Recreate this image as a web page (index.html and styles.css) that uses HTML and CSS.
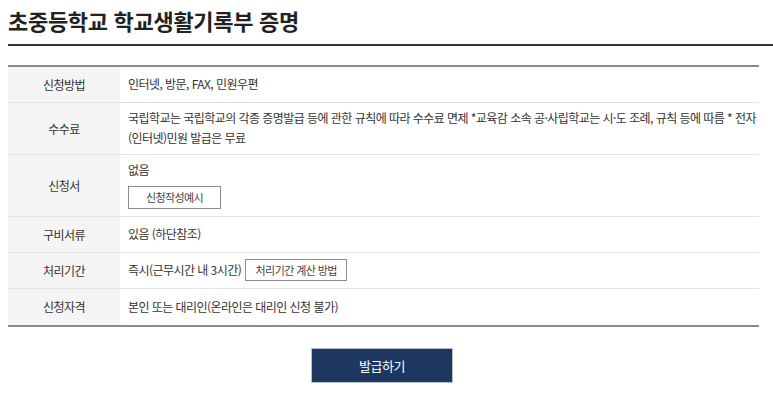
FILE: index.html
```html
<!DOCTYPE html>
<html lang="ko">
<head>
<meta charset="utf-8">
<title>초중등학교 학교생활기록부 증명</title>
<link rel="stylesheet" href="styles.css">
</head>
<body>
<h1 class="title">초중등학교 학교생활기록부 증명</h1>
<div class="info">
  <div class="row">
    <div class="label">신청방법</div>
    <div class="value">인터넷, 방문, FAX, 민원우편</div>
  </div>
  <div class="row row-multi">
    <div class="label">수수료</div>
    <div class="value">국립학교는 국립학교의 각종 증명발급 등에 관한 규칙에 따라 수수료 면제 *교육감 소속 공·사립학교는 시·도 조례, 규칙 등에 따름 * 전자 (인터넷)민원 발급은 무료</div>
  </div>
  <div class="row row-multi">
    <div class="label">신청서</div>
    <div class="value">
      <div>없음</div>
      <button class="sub-btn sub-btn-block" type="button">신청작성예시</button>
    </div>
  </div>
  <div class="row">
    <div class="label">구비서류</div>
    <div class="value">있음 (하단참조)</div>
  </div>
  <div class="row">
    <div class="label">처리기간</div>
    <div class="value value-inline">즉시(근무시간 내 3시간) <button class="sub-btn sub-btn-inline" type="button">처리기간 계산 방법</button></div>
  </div>
  <div class="row row-last">
    <div class="label">신청자격</div>
    <div class="value">본인 또는 대리인(온라인은 대리인 신청 불가)</div>
  </div>
</div>
<div class="actions">
  <button class="issue-btn" type="button">발급하기</button>
</div>
</body>
</html>
```

FILE: styles.css
```css
html, body {
  background: #ffffff;
}
body {
  margin: 8px 0 0 8px;
  font-family: "Noto Sans CJK KR", "Noto Sans", sans-serif;
  color: #333333;
}
.title {
  margin: 0;
  font-size: 22px;
  line-height: 24px;
  font-weight: 700;
  color: #222222;
  letter-spacing: -0.3px;
  padding-bottom: 12px;
  border-bottom: 2px solid #333333;
}
.info {
  width: 751px;
  margin-top: 19px;
  border-top: 2px solid #8a8a8a;
  border-bottom: 2px solid #8a8a8a;
  font-size: 12px;
  letter-spacing: -0.55px;
  line-height: 20px;
  word-break: keep-all;
}
.row {
  display: grid;
  grid-template-columns: 112px 1fr;
  min-height: 36px;
  box-sizing: border-box;
  border-bottom: 1px solid #e3e3e3;
}
.row-last {
  border-bottom: none;
}
.label {
  background: #f5f5f5;
  display: flex;
  align-items: center;
  justify-content: center;
  color: #333333;
}
.value {
  padding: 5px 0 6px 8px;
  display: flex;
  flex-direction: column;
  justify-content: center;
  align-items: flex-start;
}
.value-inline {
  flex-direction: row;
  align-items: center;
  justify-content: flex-start;
}
.row-multi .value {
  display: block;
}
.sub-btn {
  font-family: inherit;
  font-size: 11px;
  letter-spacing: -0.6px;
  color: #444444;
  background: #ffffff;
  border: 1px solid #8c8c8c;
  box-sizing: border-box;
  height: 23px;
  padding: 0;
  line-height: 21px;
}
.sub-btn-block {
  display: block;
  width: 93px;
  margin-top: 6px;
  margin-bottom: 1px;
}
.sub-btn-inline {
  width: 102px;
  height: 22px;
  line-height: 20px;
  margin-left: 4px;
}
.actions {
  width: 751px;
  display: flex;
  justify-content: center;
  margin-top: 21px;
}
.issue-btn {
  font-family: inherit;
  width: 142px;
  height: 35px;
  background: #1d3760;
  color: #ffffff;
  border: 1px solid #b7c0ce;
  font-size: 13px;
  letter-spacing: -0.4px;
  padding: 0;
  margin-left: -3px;
}
```
